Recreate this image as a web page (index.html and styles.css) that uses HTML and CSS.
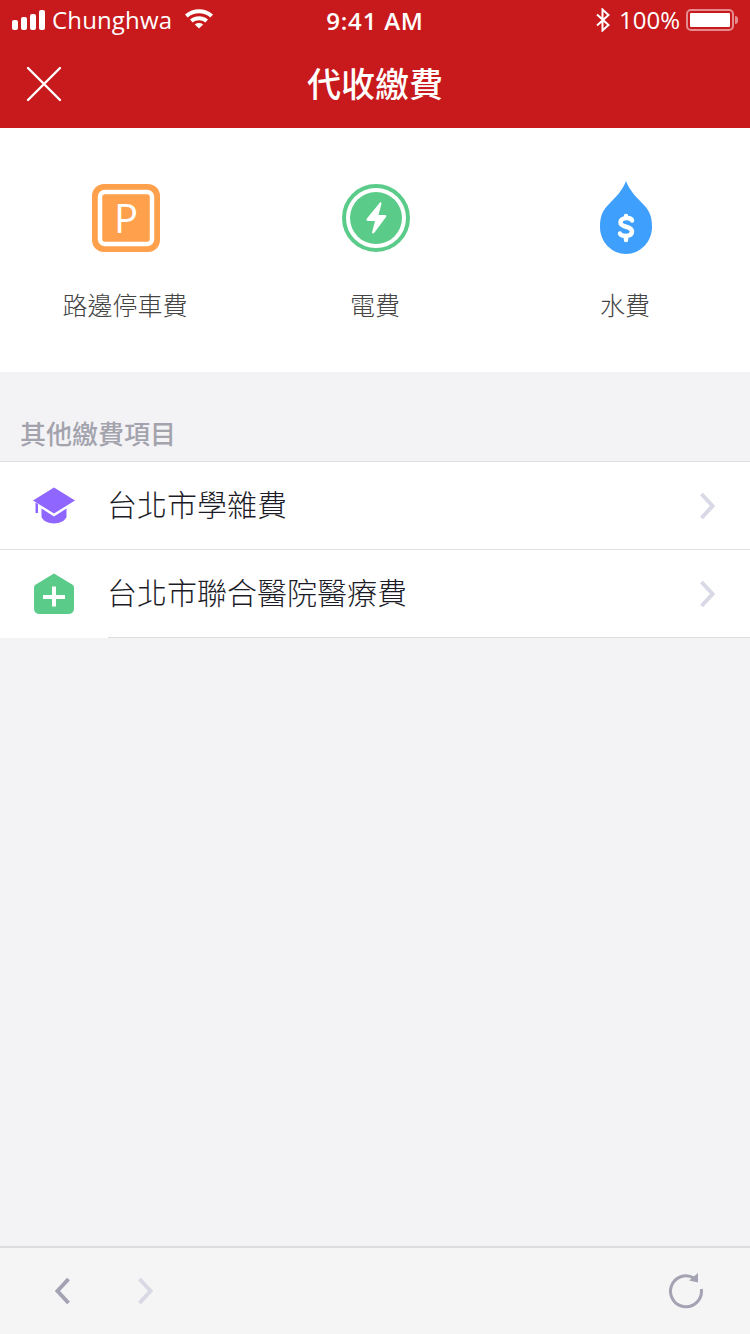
FILE: index.html
```html
<!DOCTYPE html>
<html lang="zh-Hant">
<head>
  <meta charset="UTF-8">
  <meta name="viewport" content="width=device-width, initial-scale=1.0">
  <title>代收繳費</title>
  <link rel="stylesheet" href="styles.css">
</head>
<body>
  <header class="top">
    <div class="status">
      <div class="status-left">
        <span class="signal"><i></i><i></i><i></i><i></i></span>
        <span class="carrier">Chunghwa</span>
        <svg class="wifi" width="30" height="22" viewBox="0 0 30 22">
          <path d="M1 7.5 C9 0.5 21 0.5 29 7.5 L26.4 10.4 C19.5 4.8 10.5 4.8 3.6 10.4 Z" fill="#fff"/>
          <path d="M6 12.6 C11.5 8.2 18.5 8.2 24 12.6 L21.4 15.4 C17.4 12.4 12.6 12.4 8.6 15.4 Z" fill="#fff"/>
          <path d="M10.8 17.4 C13.4 15.6 16.6 15.6 19.2 17.4 L15 21.6 Z" fill="#fff"/>
        </svg>
      </div>
      <div class="status-time">9:41 AM</div>
      <div class="status-right">
        <svg class="bluetooth" width="16" height="24" viewBox="0 0 16 24">
          <path d="M2 6.5 L13.5 17 L7.5 22.5 L7.5 1.5 L13.5 7 L2 17.5" fill="none" stroke="#fff" stroke-width="2"/>
        </svg>
        <span class="percent">100%</span>
        <span class="battery"><span class="battery-fill"></span></span>
        <span class="battery-tip"></span>
      </div>
    </div>
    <div class="nav">
      <svg class="close" width="36" height="36" viewBox="0 0 36 36">
        <path d="M2 2 L34 34 M34 2 L2 34" stroke="#fff" stroke-width="2.4" stroke-linecap="round"/>
      </svg>
      <h1>代收繳費</h1>
    </div>
  </header>

  <section class="shortcuts">
    <a class="shortcut">
      <svg class="shortcut-icon" width="68" height="68" viewBox="0 0 68 68">
        <rect width="68" height="68" rx="12" fill="#ffa04c"/>
        <rect x="8" y="8" width="52" height="52" rx="5" fill="none" stroke="#fff" stroke-width="4.500"/>
      </svg>
      <span class="p-letter">P</span>
      <span class="shortcut-label">路邊停車費</span>
    </a>
    <a class="shortcut">
      <svg class="shortcut-icon" width="68" height="68" viewBox="0 0 68 68">
        <circle cx="34" cy="34" r="32" fill="none" stroke="#5bcb89" stroke-width="4"/>
        <circle cx="34" cy="34" r="26" fill="#5bcb89"/>
        <path d="M38 18.500 L24.500 35 Q24 37 26 37 L33 37 L30 48.500 Q30.500 50.500 32.500 48.500 L44 33 Q45 31 43 31 L36.500 31 L39.500 19.500 Q39 17 38 18.500 Z" fill="#fff"/>
      </svg>
      <span class="shortcut-label">電費</span>
    </a>
    <a class="shortcut">
      <svg class="shortcut-icon drop" width="68" height="73" viewBox="0 0 68 73">
        <path d="M34 0 C37 8 42 14 50 22 C57 29 60 34 60 46 C60 61 48 73 34 73 C20 73 8 61 8 46 C8 34 11 29 18 22 C26 14 31 8 34 0 Z" fill="#3e9ffc"/>
        <path d="M40 39.500 C39 36 28.500 36 28.500 41.500 C28.500 47 40 44.500 40 50.500 C40 56 29 56 28 52.500" fill="none" stroke="#fff" stroke-width="4.500" stroke-linecap="round"/>
        <path d="M34 35 L34 37 M34 55 L34 59" stroke="#fff" stroke-width="4.500" stroke-linecap="round"/>
      </svg>
      <span class="shortcut-label">水費</span>
    </a>
  </section>

  <h2 class="section-title">其他繳費項目</h2>

  <ul class="list">
    <li class="row">
      <span class="row-icon">
        <svg width="44" height="38" viewBox="0 0 44 38">
          <path d="M22 0.500 L43 13.500 L22 26.500 L1 13.500 Z" fill="#8f66ff"/>
          <path d="M3.500 15.500 L6 17 L6 26 L3.500 26 Z" fill="#8f66ff"/>
          <path d="M9.500 21.500 L22 29.500 L34.500 21.500 L34.500 30 C31 38.500 13 38.500 9.500 30 Z" fill="#8f66ff"/>
        </svg>
      </span>
      <span class="row-text">台北市學雜費</span>
      <svg class="chevron" width="16" height="28" viewBox="0 0 16 28">
        <path d="M2.500 2 L13.500 14 L2.500 26" fill="none" stroke="#d9d9e6" stroke-width="4"/>
      </svg>
    </li>
    <li class="row">
      <span class="row-icon">
        <svg width="42" height="42" viewBox="0 0 42 42">
          <path d="M21 0.500 L40 12 Q41 13 41 15 L41 35 Q41 41 35 41 L7 41 Q1 41 1 35 L1 15 Q1 13 2 12 Z" fill="#5bcb89"/>
          <path d="M21 13.500 L21 33.500 M10 24 L32 24" stroke="#fff" stroke-width="4"/>
        </svg>
      </span>
      <span class="row-text">台北市聯合醫院醫療費</span>
      <svg class="chevron" width="16" height="28" viewBox="0 0 16 28">
        <path d="M2.500 2 L13.500 14 L2.500 26" fill="none" stroke="#d9d9e6" stroke-width="4"/>
      </svg>
    </li>
  </ul>

  <div class="spacer"></div>

  <footer class="toolbar">
    <div class="toolbar-nav">
      <svg width="16" height="28" viewBox="0 0 16 28">
        <path d="M13.500 2 L2.500 14 L13.500 26" fill="none" stroke="#a3a3b3" stroke-width="4"/>
      </svg>
      <svg width="16" height="28" viewBox="0 0 16 28">
        <path d="M2.500 2 L13.500 14 L2.500 26" fill="none" stroke="#d9d9e6" stroke-width="4"/>
      </svg>
    </div>
    <svg width="36" height="36" viewBox="0 0 36 36">
      <path d="M33.300 16 A15.500 15.500 0 1 1 26 5" fill="none" stroke="#a3a3b3" stroke-width="3"/>
      <path d="M30 0 L30 9.500 L21 7.500 Z" fill="#a3a3b3"/>
    </svg>
  </footer>
</body>
</html>
```

FILE: styles.css
```css
html, body {
  height: 100%;
}
body {
  margin: 0;
  height: 1334px;
  display: flex;
  flex-direction: column;
  overflow: hidden;
  background-color: #f3f3f6;
  font-family: "Noto Sans CJK TC", "Noto Sans", sans-serif;
}
.top {
  height: 128px;
  background-color: #c8191c;
  color: white;
}
.status {
  height: 40px;
  display: flex;
  align-items: center;
  justify-content: space-between;
  padding: 0 12px;
  font-family: "Open Sans", "Noto Sans", sans-serif;
  position: relative;
}
.status-left {
  display: flex;
  align-items: center;
}
.signal {
  display: flex;
  align-items: flex-end;
  gap: 3px;
  height: 20px;
}
.signal i {
  display: block;
  width: 6px;
  border-radius: 2px;
  background-color: white;
}
.signal i:nth-child(1) {
  height: 10px;
}
.signal i:nth-child(2) {
  height: 13px;
}
.signal i:nth-child(3) {
  height: 16px;
}
.signal i:nth-child(4) {
  height: 20px;
}
.carrier {
  margin-left: 7px;
  font-size: 24px;
  letter-spacing: 0.15px;
  line-height: 38px;
}
.wifi {
  margin-left: 12px;
  margin-top: -4px;
}
.status-time {
  position: absolute;
  left: 0;
  right: 0;
  top: 0;
  text-align: center;
  font-size: 24px;
  font-weight: 600;
  letter-spacing: 0.8px;
  line-height: 42px;
}
.status-right {
  display: flex;
  align-items: center;
}
.bluetooth {
  margin-top: -1px;
}
.percent {
  margin-left: 8px;
  font-size: 24px;
  line-height: 40px;
}
.battery {
  display: block;
  box-sizing: border-box;
  width: 48px;
  height: 22px;
  margin-left: 6px;
  padding: 2px;
  border: 2px solid rgba(255, 255, 255, 0.5);
  border-radius: 5px;
}
.battery-fill {
  display: block;
  height: 100%;
  background-color: white;
  border-radius: 1px;
}
.battery-tip {
  width: 3px;
  height: 8px;
  margin-left: 1px;
  background-color: rgba(255, 255, 255, 0.5);
  border-radius: 0 3px 3px 0;
}
.nav {
  height: 88px;
  display: flex;
  align-items: center;
  justify-content: center;
  position: relative;
}
.close {
  position: absolute;
  left: 26px;
  top: 26px;
}
.nav h1 {
  margin: -2px 0 0;
  font-size: 34px;
  font-weight: 500;
  line-height: 88px;
}
.shortcuts {
  height: 244px;
  display: flex;
  background-color: white;
}
.shortcut {
  flex: 1;
  display: flex;
  flex-direction: column;
  align-items: center;
  padding-top: 56px;
  position: relative;
}
.shortcut-icon {
  display: block;
  flex-shrink: 0;
  margin-left: 2px;
}
.drop {
  margin-top: -3px;
  margin-bottom: -2px;
}
.p-letter {
  position: absolute;
  left: 2px;
  right: 0;
  top: 56px;
  text-align: center;
  color: white;
  font-family: "Open Sans", sans-serif;
  font-size: 40px;
  line-height: 68px;
}
.shortcut-label {
  margin-top: 32px;
  color: #444;
  font-size: 25px;
  font-weight: 300;
  line-height: 40px;
}
.section-title {
  margin: 0;
  padding: 43px 20px 0;
  height: 46px;
  color: #a3a3ad;
  font-size: 26px;
  font-weight: 500;
  line-height: 36px;
}
.list {
  margin: 0;
  padding: 0;
  list-style: none;
  background-color: white;
  border-top: 1px solid #dfdfe2;
}
.row {
  height: 88px;
  display: flex;
  align-items: center;
  position: relative;
}
.row::after {
  content: "";
  position: absolute;
  left: 0;
  right: 0;
  bottom: 0;
  height: 1px;
  background-color: #dfdfe2;
}
.row:last-child::after {
  left: 108px;
}
.row-icon {
  width: 108px;
  display: flex;
  justify-content: center;
}
.row-text {
  flex: 1;
  margin: -6px 0 0 -1px;
  color: #1c1c28;
  font-size: 30px;
  font-weight: 300;
  line-height: 88px;
}
.chevron {
  margin-right: 35px;
}
.spacer {
  flex: 1;
}
.toolbar {
  box-sizing: border-box;
  height: 88px;
  display: flex;
  align-items: center;
  justify-content: space-between;
  padding: 0 46px 0 55px;
  border-top: 2px solid #dcdcdc;
  background-color: #f5f5f5;
}
.toolbar-nav {
  display: flex;
  gap: 66px;
}
.toolbar svg {
  display: block;
}
```
